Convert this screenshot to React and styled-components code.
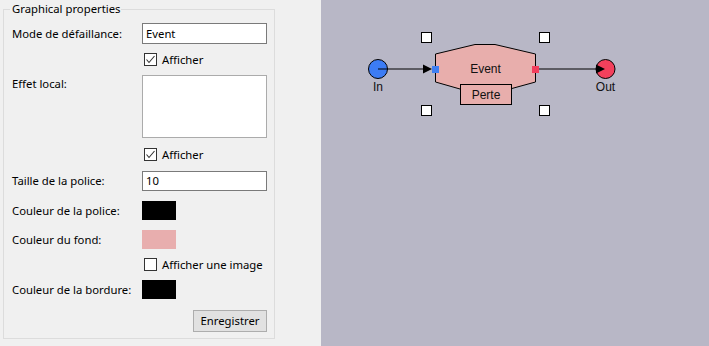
import React from "react";
import styled, { createGlobalStyle } from "styled-components";

const Global = createGlobalStyle`
  html, body { margin: 0; padding: 0; }
  body { font-family: "Noto Sans", "Open Sans", sans-serif; font-size: 11.3px; color: #000; }
`;

const Page = styled.div`
  display: flex;
  width: 709px;
  height: 346px;
  overflow: hidden;
`;

const Side = styled.div`
  width: 321px;
  flex: none;
  background: #f0f0f0;
  padding: 1px 0 0 3px;
  box-sizing: border-box;
`;

const Group = styled.fieldset`
  margin: 0;
  width: 272px;
  box-sizing: border-box;
  border: 1px solid #dcdcdc;
  padding: 6px 7px 6px 8px;
  min-width: 0;
`;

const Legend = styled.legend`
  padding: 0 1px 0 2px;
  margin-left: -2px;
  line-height: 16px;
  color: #000;
`;

const Line = styled.div`
  display: flex;
  align-items: flex-start;
  height: ${(p) => p.$h}px;
  justify-content: ${(p) => (p.$end ? "flex-end" : "flex-start")};
  padding-left: ${(p) => (p.$indent ? 130 : 0)}px;
  white-space: nowrap;
`;

const Label = styled.div`
  width: 130px;
  flex: none;
  height: ${(p) => p.$h}px;
  line-height: ${(p) => p.$h}px;
  white-space: nowrap;
`;

const Input = styled.div`
  width: 126px;
  height: ${(p) => p.$h}px;
  box-sizing: border-box;
  border: 1px solid #7a7a7a;
  background: #fff;
  padding: 0 3px;
  display: flex;
  align-items: center;
  line-height: 16px;
`;

const Area = styled.div`
  width: 126px;
  height: 63px;
  box-sizing: border-box;
  border: 1px solid #ababab;
  background: #fff;
`;

const Check = styled.label`
  display: flex;
  align-items: center;
  gap: 5px;
  padding-left: 2px;
  height: 13px;
  line-height: 13px;
  white-space: nowrap;
`;

const Box = styled.span`
  width: 13px;
  height: 13px;
  flex: none;
  box-sizing: border-box;
  border: 1px solid #333;
  background: #fff;
  display: flex;
  align-items: center;
  justify-content: center;
`;

const Swatch = styled.div`
  width: 34px;
  height: 19px;
  background: ${(p) => p.$c};
`;

const Button = styled.div`
  width: 74px;
  height: 22px;
  box-sizing: border-box;
  border: 1px solid #adadad;
  background: #e1e1e1;
  display: flex;
  align-items: center;
  justify-content: center;
  line-height: 16px;
`;

const Canvas = styled.div`
  flex: 1;
  background: #b8b7c6;
`;

const CheckBox = ({ checked, children }) => (
  <Check>
    <Box>
      {checked && (
        <svg width="11" height="11" viewBox="0 0 11 11">
          <polyline points="1.5,5.5 4,8.5 9.5,2" fill="none" stroke="#333" strokeWidth="1.1" />
        </svg>
      )}
    </Box>
    {children}
  </Check>
);

const Diagram = () => (
  <svg width="388" height="346" style={{ display: "block" }}>
    <g fontFamily="'Liberation Sans', Arial, sans-serif" fontSize="12" fill="#111">
      <polygon
        points="114.5,54 154,44.5 174,44.5 214.5,54 214.5,82 189,89 139,89 114.5,82"
        fill="#e8aeac"
        stroke="#000"
        strokeWidth="1"
      />
      <rect x="139.5" y="84.5" width="51" height="20" fill="#e8aeac" stroke="#000" strokeWidth="1" />
      <rect x="111" y="66" width="7" height="7" fill="#3f7ff2" />
      <rect x="211" y="66" width="7" height="7" fill="#f23e5c" />
      <circle cx="57" cy="69" r="9.5" fill="#3c7cf4" stroke="#000" strokeWidth="1" />
      <circle cx="284.5" cy="69" r="9.5" fill="#f3405c" stroke="#000" strokeWidth="1" />
      <line x1="57" y1="69" x2="104" y2="69" stroke="#000" strokeWidth="1" />
      <line x1="218" y1="69" x2="277" y2="69" stroke="#000" strokeWidth="1" />
      <polygon points="111,69 102,64.5 102,73.5" fill="#000" />
      <polygon points="284,69 275,64.5 275,73.5" fill="#000" />
      <text x="164.5" y="73" textAnchor="middle">Event</text>
      <text x="165" y="99" textAnchor="middle">Perte</text>
      <text x="57" y="91" textAnchor="middle">In</text>
      <text x="284.5" y="91" textAnchor="middle">Out</text>
      {[
        [100.5, 32.5],
        [218.5, 32.5],
        [100.5, 105.5],
        [218.5, 105.5],
      ].map(([x, y], i) => (
        <rect key={i} x={x} y={y} width="10" height="10" fill="#fff" stroke="#000" strokeWidth="1" />
      ))}
    </g>
  </svg>
);

export default function App() {
  return (
    <Page>
      <Global />
      <Side>
        <Group>
          <Legend>Graphical properties</Legend>
          <Line $h={30}>
            <Label $h={21}>Mode de défaillance:</Label>
            <Input $h={21}>Event</Input>
          </Line>
          <Line $h={22} $indent>
            <CheckBox checked>Afficher</CheckBox>
          </Line>
          <Line $h={73}>
            <Label $h={18}>Effet local:</Label>
            <Area />
          </Line>
          <Line $h={23} $indent>
            <CheckBox checked>Afficher</CheckBox>
          </Line>
          <Line $h={30}>
            <Label $h={20}>Taille de la police:</Label>
            <Input $h={20}>10</Input>
          </Line>
          <Line $h={29}>
            <Label $h={19}>Couleur de la police:</Label>
            <Swatch $c="#000" />
          </Line>
          <Line $h={28}>
            <Label $h={19}>Couleur du fond:</Label>
            <Swatch $c="#e8aeae" />
          </Line>
          <Line $h={22} $indent>
            <CheckBox>Afficher une image</CheckBox>
          </Line>
          <Line $h={30}>
            <Label $h={19}>Couleur de la bordure:</Label>
            <Swatch $c="#000" />
          </Line>
          <Line $h={22} $end>
            <Button>Enregistrer</Button>
          </Line>
        </Group>
      </Side>
      <Canvas>
        <Diagram />
      </Canvas>
    </Page>
  );
}
